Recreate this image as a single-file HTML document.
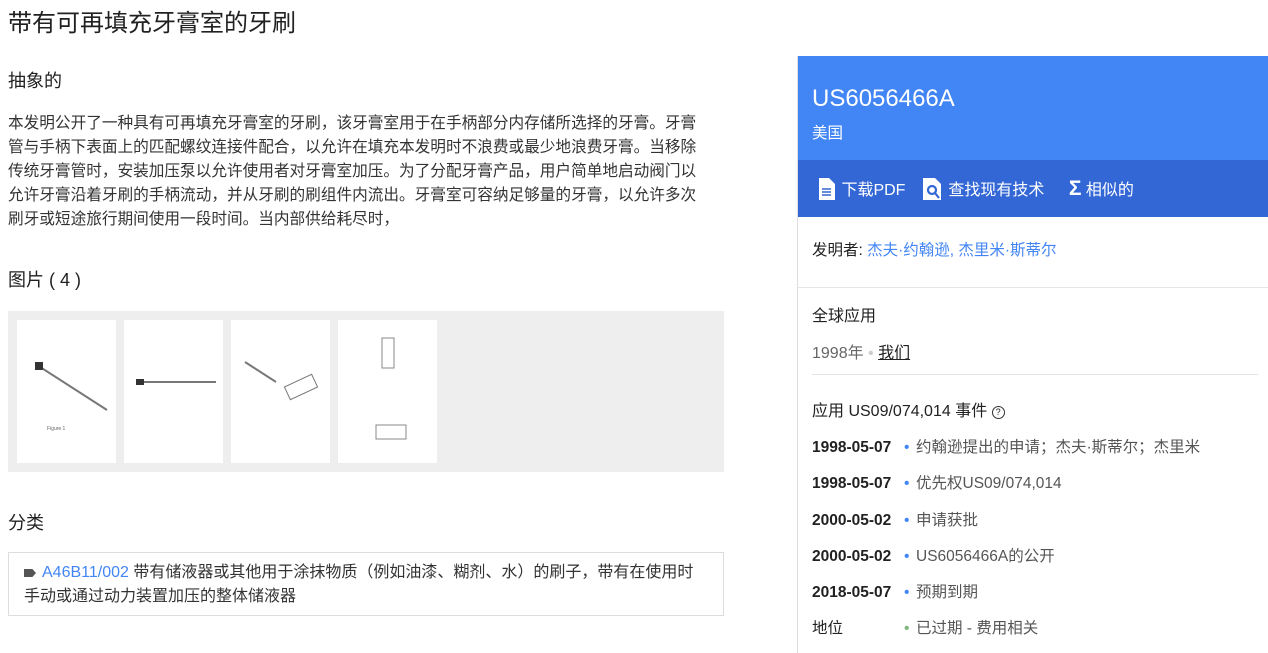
<!DOCTYPE html>
<html><head><meta charset="utf-8"><style>
*{margin:0;padding:0;box-sizing:border-box}
body{width:1268px;height:653px;overflow:hidden;background:#fff;font-family:"Liberation Sans","Noto Sans CJK SC",sans-serif;color:#212121;position:relative}
.a{position:absolute;white-space:nowrap}
.thumb{position:absolute;top:320px;width:99px;height:143px;background:#fff}
.ev{position:absolute;left:812px;font-size:15.5px;white-space:nowrap}
.ev b{display:inline-block;width:92px;font-weight:bold}
.ev i{display:inline-block;width:12px;color:#4285f4;font-style:normal}
</style></head><body>
<div class="a" style="left:8px;top:3px;font-size:24px">带有可再填充牙膏室的牙刷</div>
<div class="a" style="left:8px;top:67px;font-size:18px">抽象的</div>
<div style="position:absolute;left:8px;top:112px;width:740px;font-size:15.65px;line-height:24px;color:#333;white-space:nowrap">本发明公开了一种具有可再填充牙膏室的牙刷，该牙膏室用于在手柄部分内存储所选择的牙膏。牙膏<br>管与手柄下表面上的匹配螺纹连接件配合，以允许在填充本发明时不浪费或最少地浪费牙膏。当移除<br>传统牙膏管时，安装加压泵以允许使用者对牙膏室加压。为了分配牙膏产品，用户简单地启动阀门以<br>允许牙膏沿着牙刷的手柄流动，并从牙刷的刷组件内流出。牙膏室可容纳足够量的牙膏，以允许多次<br>刷牙或短途旅行期间使用一段时间。当内部供给耗尽时，</div>
<div class="a" style="left:8px;top:266px;font-size:18px">图片 ( 4 )</div>
<div style="position:absolute;left:8px;top:311px;width:716px;height:161px;background:#eee"></div>
<div class="thumb" style="left:17px"><svg width="99" height="143"><line x1="20" y1="45" x2="90" y2="90" stroke="#777" stroke-width="2"/><rect x="18" y="42" width="8" height="8" fill="#333"/><text x="30" y="110" font-size="5" fill="#666">Figure 1</text></svg></div>
<div class="thumb" style="left:124px"><svg width="99" height="143"><line x1="12" y1="62" x2="92" y2="62" stroke="#777" stroke-width="2"/><rect x="12" y="59" width="8" height="6" fill="#333"/></svg></div>
<div class="thumb" style="left:231px"><svg width="99" height="143"><line x1="14" y1="42" x2="45" y2="62" stroke="#777" stroke-width="2"/><rect x="55" y="60" width="30" height="14" fill="none" stroke="#777" transform="rotate(-25 70 67)"/></svg></div>
<div class="thumb" style="left:338px"><svg width="99" height="143"><rect x="44" y="18" width="12" height="30" fill="none" stroke="#888"/><rect x="38" y="105" width="30" height="14" fill="none" stroke="#888"/></svg></div>
<div class="a" style="left:8px;top:509px;font-size:18px">分类</div>
<div style="position:absolute;left:8px;top:552px;width:716px;height:64px;border:1px solid #ddd"></div>
<div style="position:absolute;left:24px;top:561px;width:700px;font-size:16px;line-height:24px;color:#333;white-space:nowrap"><span style="display:inline-block;width:12px;height:8px;background:#555;margin-right:6px;clip-path:polygon(0 0,70% 0,100% 50%,70% 100%,0 100%)"></span><span style="color:#4285f4">A46B11/002</span> 带有储液器或其他用于涂抹物质（例如油漆、糊剂、水）的刷子，带有在使用时<br>手动或通过动力装置加压的整体储液器</div>
<div style="position:absolute;left:797px;top:56px;width:1px;height:597px;background:#ddd"></div>
<div style="position:absolute;left:798px;top:56px;width:470px;height:104px;background:#4285f4"></div>
<div style="position:absolute;left:798px;top:160px;width:470px;height:57px;background:#3367d6"></div>
<div class="a" style="left:812px;top:85px;font-size:24px;color:#fff">US6056466A</div>
<div class="a" style="left:812px;top:121px;font-size:15.5px;color:#fff">美国</div>
<div class="a" style="left:817px;top:178px;font-size:16px;color:#fff;line-height:22px">
<svg width="20" height="22" style="vertical-align:-5px"><path d="M2 0h10l6 6v16H2z" fill="#fff"/><path d="M5 11h9M5 14h9M5 17h9" stroke="#3367d6" stroke-width="1.5"/></svg> 下载PDF
<span style="margin-left:12px"><svg width="22" height="22" style="vertical-align:-5px"><path d="M1 0h12l6 6v16H1z" fill="#fff"/><circle cx="10" cy="12" r="4" fill="none" stroke="#3367d6" stroke-width="2.2"/><path d="M13 15l4 5" stroke="#3367d6" stroke-width="2.2"/></svg> 查找现有技术</span>
<span style="margin-left:20px"><span style="font-weight:bold;font-size:21px">Σ</span> 相似的</span></div>
<div class="a" style="left:812px;top:238px;font-size:15.5px">发明者: <span style="color:#4285f4">杰夫·约翰逊, 杰里米·斯蒂尔</span></div>
<div style="position:absolute;left:798px;top:287px;width:470px;height:1px;background:#e5e5e5"></div>
<div class="a" style="left:812px;top:302px;font-size:16px">全球应用</div>
<div class="a" style="left:812px;top:339px;font-size:16px;color:#666">1998年 <span style="color:#ccc">•</span> <span style="color:#212121;text-decoration:underline">我们</span></div>
<div style="position:absolute;left:812px;top:374px;width:446px;height:1px;background:#e5e5e5"></div>
<div class="a" style="left:812px;top:397px;font-size:16px">应用 US09/074,014 事件 <span style="display:inline-block;width:13px;height:13px;border:1.5px solid #333;border-radius:50%;font-size:9px;text-align:center;line-height:10px;vertical-align:1px">?</span></div>
<div class="ev" style="top:435px"><b>1998-05-07</b><i>•</i><span style="color:#555">约翰逊提出的申请；杰夫·斯蒂尔；杰里米</span></div>
<div class="ev" style="top:471px"><b>1998-05-07</b><i>•</i><span style="color:#555">优先权US09/074,014</span></div>
<div class="ev" style="top:508px"><b>2000-05-02</b><i>•</i><span style="color:#555">申请获批</span></div>
<div class="ev" style="top:544px"><b>2000-05-02</b><i>•</i><span style="color:#555">US6056466A的公开</span></div>
<div class="ev" style="top:580px"><b>2018-05-07</b><i>•</i><span style="color:#555">预期到期</span></div>
<div class="ev" style="top:616px"><b style="font-weight:normal">地位</b><i style="color:#7cb87c">•</i><span style="color:#555">已过期 - 费用相关</span></div>
</body></html>
